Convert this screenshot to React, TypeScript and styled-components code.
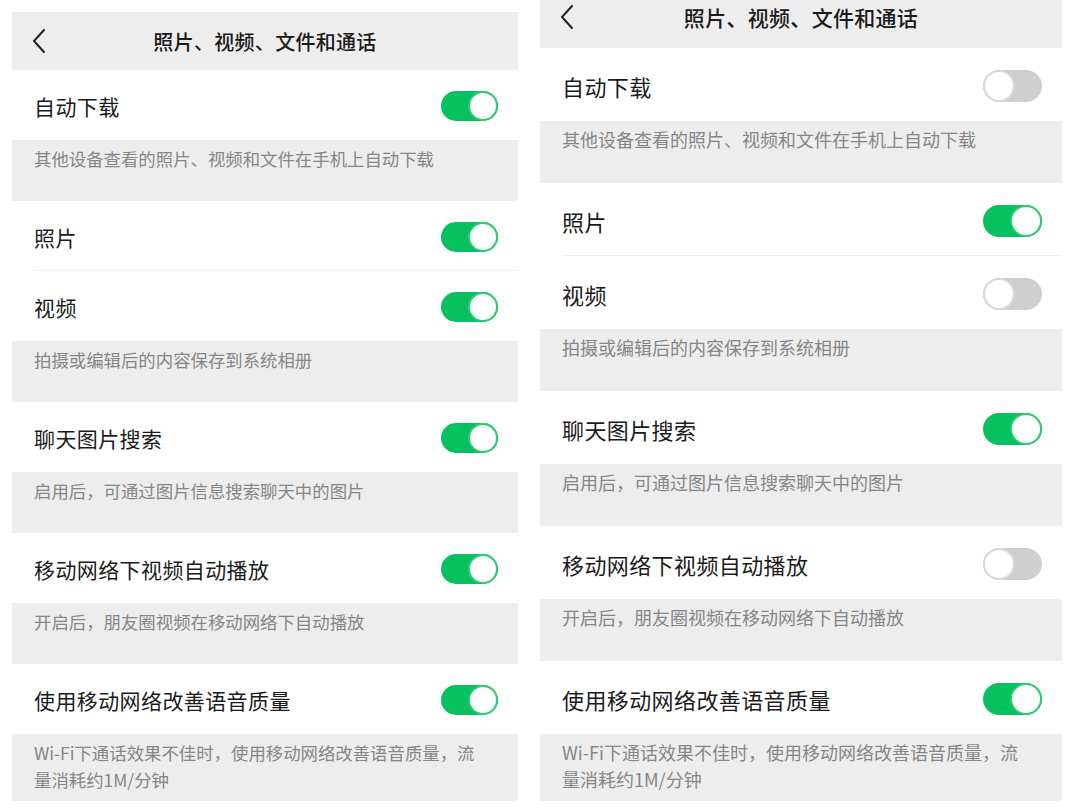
import React from "react";
import styled, { createGlobalStyle } from "styled-components";

const GlobalStyle = createGlobalStyle`
  html, body {
    margin: 0;
    padding: 0;
    background: #ffffff;
  }
  body {
    font-family: "Noto Sans CJK SC", "Noto Sans", sans-serif;
    -webkit-font-smoothing: antialiased;
  }
`;

const colors = {
  green: "#07c160",
  off: "#cfcfcf",
  gray: "#ededed",
  text: "#1b1b1b",
  hint: "#868686",
  line: "#f0f0f0",
};

interface Scale {
  header: number;
  headerPadBottom: number;
  row: number;
  desc: number;
  title: number;
  label: number;
  hint: number;
  toggleW: number;
  toggleH: number;
}

const leftScale: Scale = {
  header: 58,
  headerPadBottom: 0,
  row: 70,
  desc: 61,
  title: 20,
  label: 21,
  hint: 17.4,
  toggleW: 57,
  toggleH: 30,
};

const rightScale: Scale = {
  header: 48,
  headerPadBottom: 14,
  row: 73,
  desc: 62,
  title: 21,
  label: 22,
  hint: 18,
  toggleW: 59,
  toggleH: 32,
};

type Item =
  | { kind: "row"; label: string; divider?: boolean }
  | { kind: "desc"; text: string };

const items: Item[] = [
  { kind: "row", label: "自动下载" },
  { kind: "desc", text: "其他设备查看的照片、视频和文件在手机上自动下载" },
  { kind: "row", label: "照片", divider: true },
  { kind: "row", label: "视频" },
  { kind: "desc", text: "拍摄或编辑后的内容保存到系统相册" },
  { kind: "row", label: "聊天图片搜索" },
  { kind: "desc", text: "启用后，可通过图片信息搜索聊天中的图片" },
  { kind: "row", label: "移动网络下视频自动播放" },
  { kind: "desc", text: "开启后，朋友圈视频在移动网络下自动播放" },
  { kind: "row", label: "使用移动网络改善语音质量" },
  {
    kind: "desc",
    text: "Wi-Fi下通话效果不佳时，使用移动网络改善语音质量，流量消耗约1M/分钟",
  },
];

const Page = styled.div`
  display: flex;
  align-items: flex-start;
  gap: 22px;
  padding-left: 12px;
  height: 810px;
  overflow: hidden;
`;

const Panel = styled.div<{ $width: number; $top: number }>`
  width: ${(p) => p.$width}px;
  margin-top: ${(p) => p.$top}px;
  display: flex;
  flex-direction: column;
`;

const Header = styled.div<{ $s: Scale }>`
  position: relative;
  height: ${(p) => p.$s.header}px;
  padding-bottom: ${(p) => p.$s.headerPadBottom}px;
  box-sizing: border-box;
  background: ${colors.gray};
  display: flex;
  align-items: center;
  justify-content: center;
`;

const Back = styled.svg`
  position: absolute;
  left: 20px;
`;

const Title = styled.div<{ $size: number }>`
  font-size: ${(p) => p.$size}px;
  font-weight: 500;
  color: ${colors.text};
  letter-spacing: 0.3px;
`;

const Row = styled.div<{ $s: Scale }>`
  height: ${(p) => p.$s.row}px;
  background: #ffffff;
  display: flex;
  align-items: center;
  justify-content: space-between;
  padding: 2px 20px 0 22px;
  box-sizing: border-box;
  position: relative;
`;

const Divider = styled.div`
  position: absolute;
  left: 22px;
  right: 0;
  bottom: 0;
  height: 1px;
  background: ${colors.line};
`;

const Label = styled.div<{ $size: number }>`
  font-size: ${(p) => p.$size}px;
  color: ${colors.text};
  letter-spacing: 0.4px;
`;

const Desc = styled.div<{ $s: Scale }>`
  min-height: ${(p) => p.$s.desc}px;
  background: ${colors.gray};
  padding: 5px 34px 8px 22px;
  box-sizing: border-box;
  font-size: ${(p) => p.$s.hint}px;
  line-height: 27px;
  color: ${colors.hint};
`;

const Track = styled.div<{ $on: boolean; $w: number; $h: number }>`
  width: ${(p) => p.$w}px;
  height: ${(p) => p.$h}px;
  border-radius: ${(p) => p.$h / 2}px;
  background: ${(p) => (p.$on ? colors.green : colors.off)};
  display: flex;
  justify-content: ${(p) => (p.$on ? "flex-end" : "flex-start")};
  flex-shrink: 0;
`;

const Knob = styled.div<{ $on: boolean; $h: number }>`
  width: ${(p) => p.$h}px;
  height: ${(p) => p.$h}px;
  border-radius: 50%;
  box-sizing: border-box;
  background: #ffffff;
  border: 2px solid ${(p) => (p.$on ? "#2fcb74" : "#d8d8d8")};
`;

const Toggle: React.FC<{ on: boolean; s: Scale }> = ({ on, s }) => (
  <Track $on={on} $w={s.toggleW} $h={s.toggleH}>
    <Knob $on={on} $h={s.toggleH} />
  </Track>
);

interface PanelProps {
  s: Scale;
  width: number;
  top: number;
  states: boolean[];
}

const SettingsPanel: React.FC<PanelProps> = ({ s, width, top, states }) => {
  let rowIndex = 0;
  return (
    <Panel $width={width} $top={top}>
      <Header $s={s}>
        <Back
          width="14"
          height="26"
          viewBox="0 0 14 26"
          style={{ top: (s.header - s.headerPadBottom) / 2 - 13 }}
        >
          <path d="M12 2 L2 13 L12 24" fill="none" stroke="#222" strokeWidth="2" strokeLinecap="round" strokeLinejoin="round" />
        </Back>
        <Title $size={s.title}>照片、视频、文件和通话</Title>
      </Header>
      {items.map((item, i) => {
        if (item.kind === "desc") {
          return (
            <Desc key={i} $s={s}>
              {item.text}
            </Desc>
          );
        }
        const on = states[rowIndex++];
        return (
          <Row key={i} $s={s}>
            <Label $size={s.label}>{item.label}</Label>
            <Toggle on={on} s={s} />
            {item.divider && <Divider />}
          </Row>
        );
      })}
    </Panel>
  );
};

export default function App() {
  return (
    <>
      <GlobalStyle />
      <Page>
        <SettingsPanel s={leftScale} width={506} top={12} states={[true, true, true, true, true, true]} />
        <SettingsPanel s={rightScale} width={522} top={0} states={[false, true, false, true, false, true]} />
      </Page>
    </>
  );
}
